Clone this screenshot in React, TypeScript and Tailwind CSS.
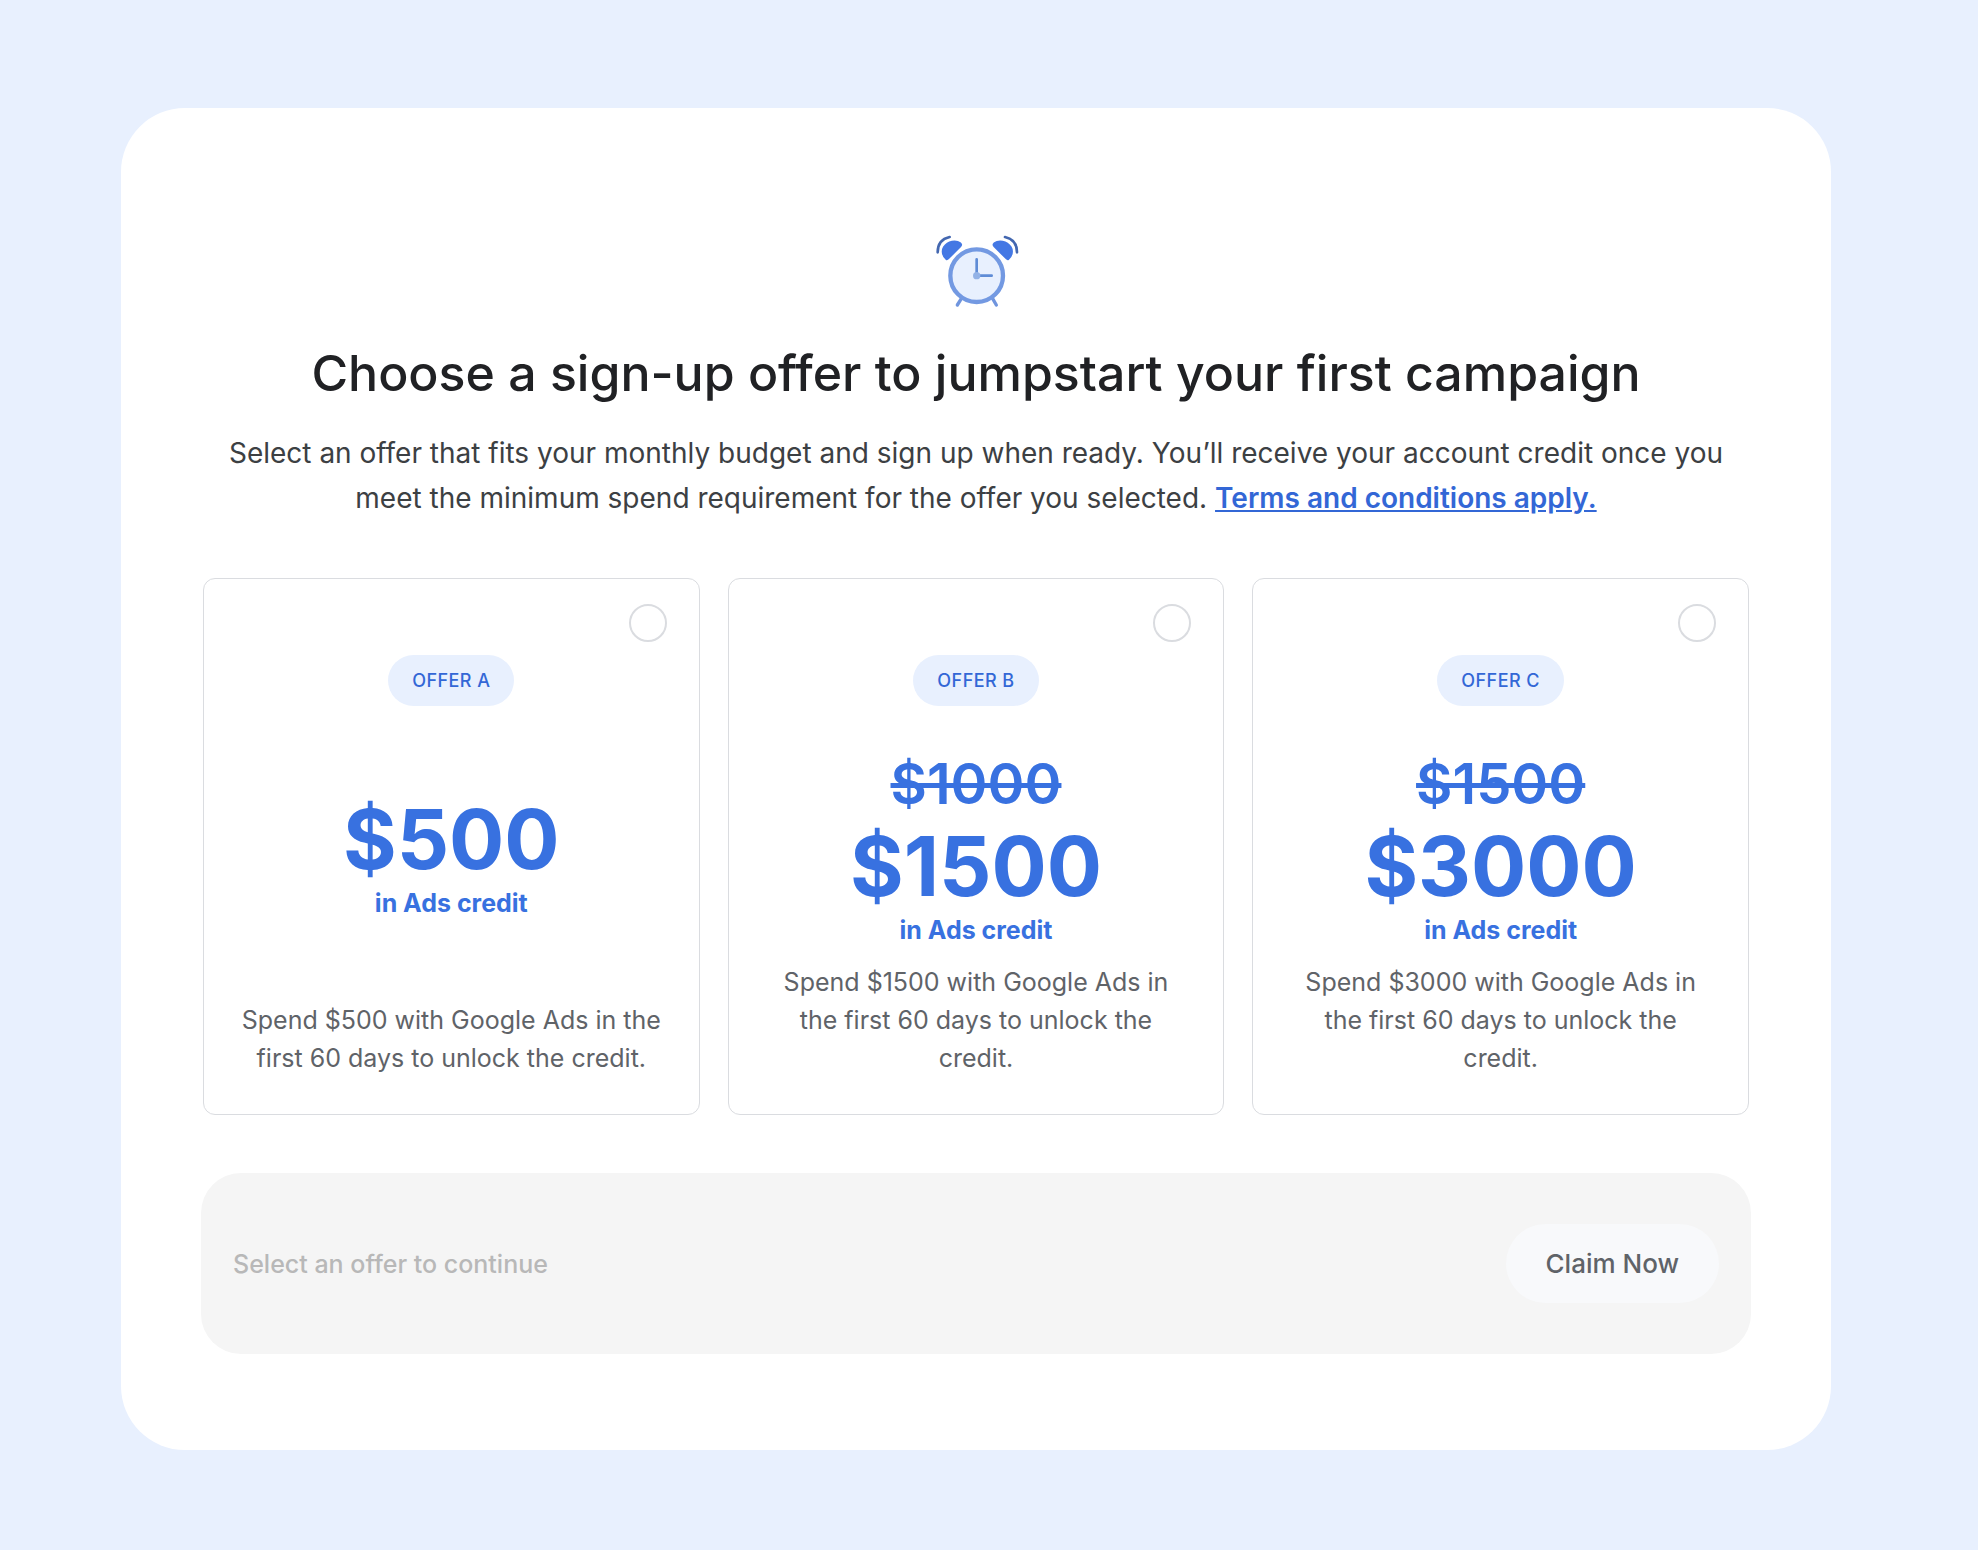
import { useState } from "react";

type Offer = {
  id: string;
  label: string;
  oldCredit?: string;
  credit: string;
};

const offers: Offer[] = [
  { id: "a", label: "Offer A", credit: "$500" },
  { id: "b", label: "Offer B", oldCredit: "$1000", credit: "$1500" },
  { id: "c", label: "Offer C", oldCredit: "$1500", credit: "$3000" },
];

function AlarmClock() {
  return (
    <svg viewBox="33 30 270 240" className="w-[90px] h-20" fill="none" aria-hidden="true">
      {/* ringing arcs */}
      <path d="M53 97 C53 72 66 56 89 51" stroke="#4367b0" strokeWidth="8" strokeLinecap="round" />
      <path d="M291 97 C291 72 278 56 255 51" stroke="#4367b0" strokeWidth="8" strokeLinecap="round" />
      {/* bells */}
      <path d="M79 117 C68 108 65 92 72 81 C84 63 108 60 121 70 C124 73 124 76 121 79 L84 116 C82 118 81 118 79 117 Z" fill="#4478e4" stroke="#4478e4" strokeWidth="6" strokeLinejoin="round" />
      <path d="M265 117 C276 108 279 92 272 81 C260 63 236 60 223 70 C220 73 220 76 223 79 L260 116 C262 118 263 118 265 117 Z" fill="#4478e4" stroke="#4478e4" strokeWidth="6" strokeLinejoin="round" />
      {/* legs */}
      <path d="M124 236 L112 255 M218 236 L229 255" stroke="#7095de" strokeWidth="10" strokeLinecap="round" />
      <circle cx="170" cy="167" r="79" fill="#e8f0fe" stroke="#7399e2" strokeWidth="13" />
      <path d="M170 118 V167 H215" stroke="#5f8cd6" strokeWidth="8" strokeLinecap="round" />
      <circle cx="170" cy="167" r="11" fill="#93b2e6" />
    </svg>
  );
}

function OfferCard({
  offer,
  checked,
  onSelect,
}: {
  offer: Offer;
  checked: boolean;
  onSelect: () => void;
}) {
  return (
    <label className="flex flex-col items-center rounded-xl border border-[#dadce0] px-8 pt-[25px] pb-[37px] text-center cursor-pointer">
      <input
        type="radio"
        name="offer"
        value={offer.id}
        checked={checked}
        onChange={onSelect}
        className="appearance-none self-end w-[38px] h-[38px] rounded-full border-2 border-[#dadce0] bg-white checked:border-[12px] checked:border-[#3871e0]"
      />
      <span className="mt-[13px] rounded-full bg-[#e8f0fe] px-6 text-lg leading-[51px] font-medium tracking-wide uppercase text-[#3367d6]">
        {offer.label}
      </span>
      <span className="flex flex-1 flex-col items-center justify-center mt-6 font-bold text-[#3871e0]">
        {offer.oldCredit && (
          <s className="pt-4 text-[56px] leading-[76px] font-semibold">{offer.oldCredit}</s>
        )}
        <span className="text-[82px] leading-[90px]">{offer.credit}</span>
        <span className="text-[25px] leading-9">in Ads credit</span>
      </span>
      <span className="mt-[15px] px-1 text-[25px] leading-[38px] text-[#5f6368]">
        {`Spend ${offer.credit} with Google Ads in the first 60 days to unlock the credit.`}
      </span>
    </label>
  );
}

export default function App() {
  const [selected, setSelected] = useState<string | null>(null);

  return (
    <div className="min-h-screen bg-[#e8f0fe] pt-[108px] pb-[100px] pl-[121px] pr-[147px] font-['Inter',sans-serif]">
      <main className="rounded-[64px] bg-white px-20 pt-[122px] pb-24">
        <div className="flex flex-col items-center text-center">
          <AlarmClock />
          <h1 className="mt-[31px] text-[50px] leading-[64px] font-medium text-[#202124]">
            Choose a sign-up offer to jumpstart your first campaign
          </h1>
          <p className="mt-[26px] px-6 text-[28px] leading-[45px] text-[#3c4043]">
            Select an offer that fits your monthly budget and sign up when ready. You’ll receive your
            account credit once you meet the minimum spend requirement for the offer you selected.{" "}
            <a href="#" className="font-semibold text-[#3367d6] underline">
              Terms and conditions apply.
            </a>
          </p>
        </div>

        <div className="mt-[57px] grid grid-cols-3 gap-7 px-0.5">
          {offers.map((offer) => (
            <OfferCard
              key={offer.id}
              offer={offer}
              checked={selected === offer.id}
              onSelect={() => setSelected(offer.id)}
            />
          ))}
        </div>

        <div className="mt-[58px] flex items-center justify-between rounded-[40px] bg-[#f5f5f5] px-8 py-[51px]">
          <p className="text-[25px] leading-9 font-medium text-[#b8b8b8]">Select an offer to continue</p>
          <button
            type="button"
            disabled={!selected}
            className="rounded-full bg-[#f8f9fb] px-10 text-[26px] leading-[79px] font-medium text-[#5f6368]"
          >
            Claim Now
          </button>
        </div>
      </main>
    </div>
  );
}
